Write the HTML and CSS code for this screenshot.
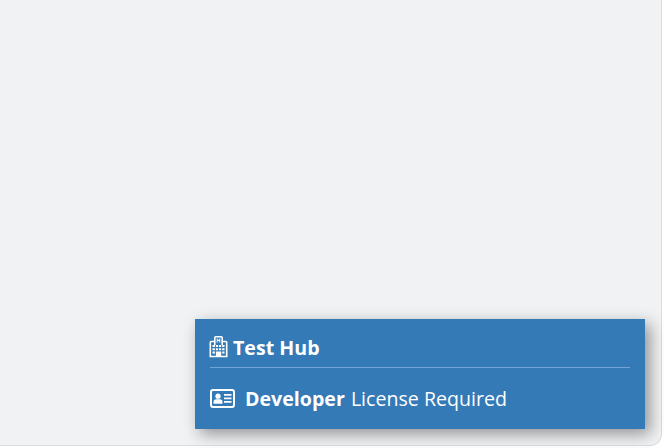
FILE: index.html
```html
<!DOCTYPE html>
<html lang="en">
<head>
<meta charset="utf-8">
<title>Test Hub</title>
<link rel="stylesheet" href="styles.css">
</head>
<body>
<main class="stage">
  <section class="card">
    <h1 class="hub">
      <svg class="hub-icon" viewBox="0 0 18 22" aria-hidden="true">
        <path class="line" d="M5.500 5.500H1.800a1 1 0 0 0-1 1v14h16.400v-14a1 1 0 0 0-1-1h-3.700"/>
        <path class="line" d="M5.300 9V1.800a1 1 0 0 1 1-1h5.400a1 1 0 0 1 1 1V9"/>
        <path class="fill" d="M7.200 2.500h1v1.300h1.600V2.500h1v4h-1V5H8.200v1.500h-1zM3 9h2.400v2H3zM6.400 9h2.200v2H6.400zM9.500 9h2.200v2H9.500zM12.700 9H15v2h-2.300zM3 12.200h2.400v2H3zM6.400 12.200h2.200v2H6.400zM9.500 12.200h2.200v2H9.500zM12.700 12.200H15v2h-2.300zM3 15.400h2.400v2H3zM12.700 15.400H15v2h-2.300zM6.400 15.400h5.300V21H6.400z"/>
      </svg>
      <span>Test Hub</span>
    </h1>
    <p class="license">
      <svg class="license-icon" viewBox="0 0 25 19" aria-hidden="true">
        <rect class="line wide" x="1" y="1" width="23" height="17" rx="2"/>
        <circle class="fill" cx="8" cy="7.200" r="2.600"/>
        <path class="fill" d="M3.500 14.800v-1.800c0-1.600 1.200-2.700 2.600-2.700h3.800c1.400 0 2.600 1.100 2.600 2.700v1.800z"/>
        <path class="fill" d="M14 5h7.500v1.800H14zM14 8.500h7.500v1.800H14zM14 12h7.500v1.800H14z"/>
      </svg>
      <span><strong>Developer</strong> License Required</span>
    </p>
  </section>
</main>
</body>
</html>
```
FILE: styles.css
```css
* {
  box-sizing: border-box;
}
html, body {
  margin: 0;
  height: 100%;
  background: #ffffff;
  overflow: hidden;
}
body {
  font-family: "Open Sans", "Noto Sans", sans-serif;
  color: #ffffff;
}
.stage {
  width: 662px;
  height: 446px;
  display: flex;
  justify-content: flex-end;
  align-items: flex-end;
  padding: 0 16px 16px 0;
  background: #f1f2f4;
  border-right: 1px solid #dcdde0;
  border-bottom: 1px solid #dcdde0;
  border-bottom-right-radius: 12px;
}
.card {
  width: 450px;
  height: 110px;
  padding: 13px 15px 0;
  background: #337ab7;
  box-shadow: 5px 5px 15px rgba(0, 0, 0, 0.4);
}
.hub {
  display: flex;
  align-items: center;
  gap: 5px;
  height: 36px;
  margin: 0;
  padding-bottom: 5px;
  font-size: 19.600px;
  font-weight: 700;
  border-bottom: 1px solid #73a6d6;
}
.hub-icon {
  width: 19px;
  height: 22px;
  margin-left: -1px;
}
.license {
  display: flex;
  align-items: center;
  gap: 10px;
  height: 42px;
  margin: 9px 0 0;
  font-size: 19.600px;
}
.license strong {
  font-weight: 700;
  margin-right: 1px;
}
.license-icon {
  width: 25px;
  height: 19px;
}
.line {
  fill: none;
  stroke: #ffffff;
  stroke-width: 1.600;
}
.wide {
  stroke-width: 2;
}
.fill {
  fill: #ffffff;
}
```
